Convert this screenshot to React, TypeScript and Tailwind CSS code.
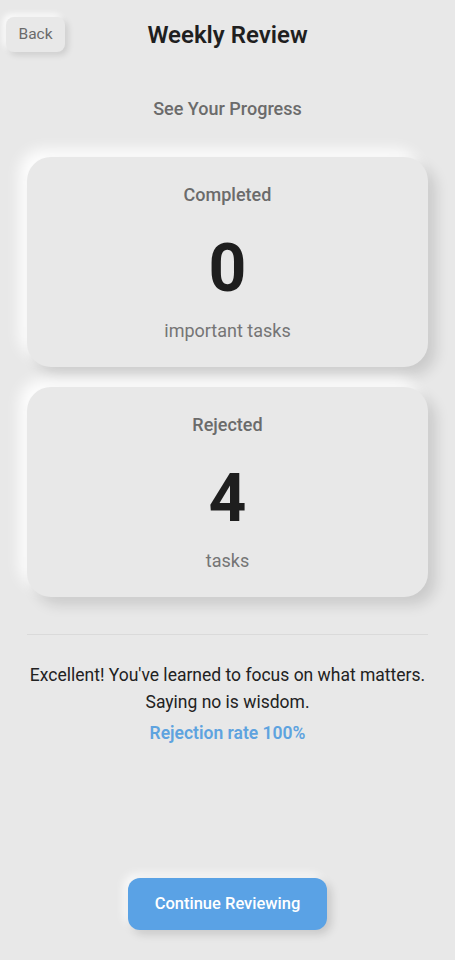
import React from "react";

function StatCard({ label, value, sub }: { label: string; value: string; sub: string }) {
  return (
    <div className="mx-[27px] h-[210px] rounded-[24px] bg-[#e8e8e8] shadow-[8px_8px_14px_rgba(0,0,0,0.13),-8px_-8px_14px_rgba(255,255,255,0.9)] flex flex-col items-center pt-[26px]">
      <div className="text-[18px] leading-[24px] font-medium text-[#6b6b6b]">{label}</div>
      <div className="mt-[24px] text-[66px] leading-[76px] font-bold text-[#1e1e1e]">{value}</div>
      <div className="mt-[12px] text-[18px] leading-[24px] text-[#757575]">{sub}</div>
    </div>
  );
}

export default function App() {
  return (
    <div
      className="w-full min-h-[960px] bg-[#e8e8e8] flex flex-col"
      style={{ fontFamily: "Roboto, 'Noto Sans', sans-serif" }}
    >
      <div className="grid grid-cols-[1fr_auto_1fr] items-center pt-[17px] h-[35px] box-content">
        <div className="pl-[6px]">
          <button className="w-[59px] h-[35px] rounded-[8px] bg-[#e8e8e8] text-[15.5px] text-[#6a6a6a] shadow-[3px_3px_6px_rgba(0,0,0,0.12),-3px_-3px_6px_rgba(255,255,255,0.9)]">
            Back
          </button>
        </div>
        <h1 className="text-[24px] font-semibold text-[#1f1f1f] leading-[30px]">Weekly Review</h1>
        <div />
      </div>

      <div className="mt-[45px] text-center text-[18px] leading-[24px] font-medium text-[#6b6b6b]">See Your Progress</div>

      <div className="mt-[36px] flex flex-col gap-[20px]">
        <StatCard label="Completed" value="0" sub="important tasks" />
        <StatCard label="Rejected" value="4" sub="tasks" />
      </div>

      <div className="mx-[27px] mt-[37px] h-px bg-[#dadada]" />

      <div className="mt-[27px] text-center text-[17.5px] leading-[27px] text-[#222]">
        <p>Excellent! You've learned to focus on what matters.</p>
        <p>Saying no is wisdom.</p>
      </div>
      <div className="mt-[5px] text-center text-[17.5px] leading-[24px] font-semibold text-[#5ea3df]">Rejection rate 100%</div>

      <div className="mt-[133px] flex justify-center">
        <button className="w-[199px] h-[52px] rounded-[12px] bg-[#5aa2e5] text-white text-[16.5px] font-medium shadow-[4px_4px_10px_rgba(0,0,0,0.15),-4px_-4px_10px_rgba(255,255,255,0.8)]">
          Continue Reviewing
        </button>
      </div>
    </div>
  );
}
